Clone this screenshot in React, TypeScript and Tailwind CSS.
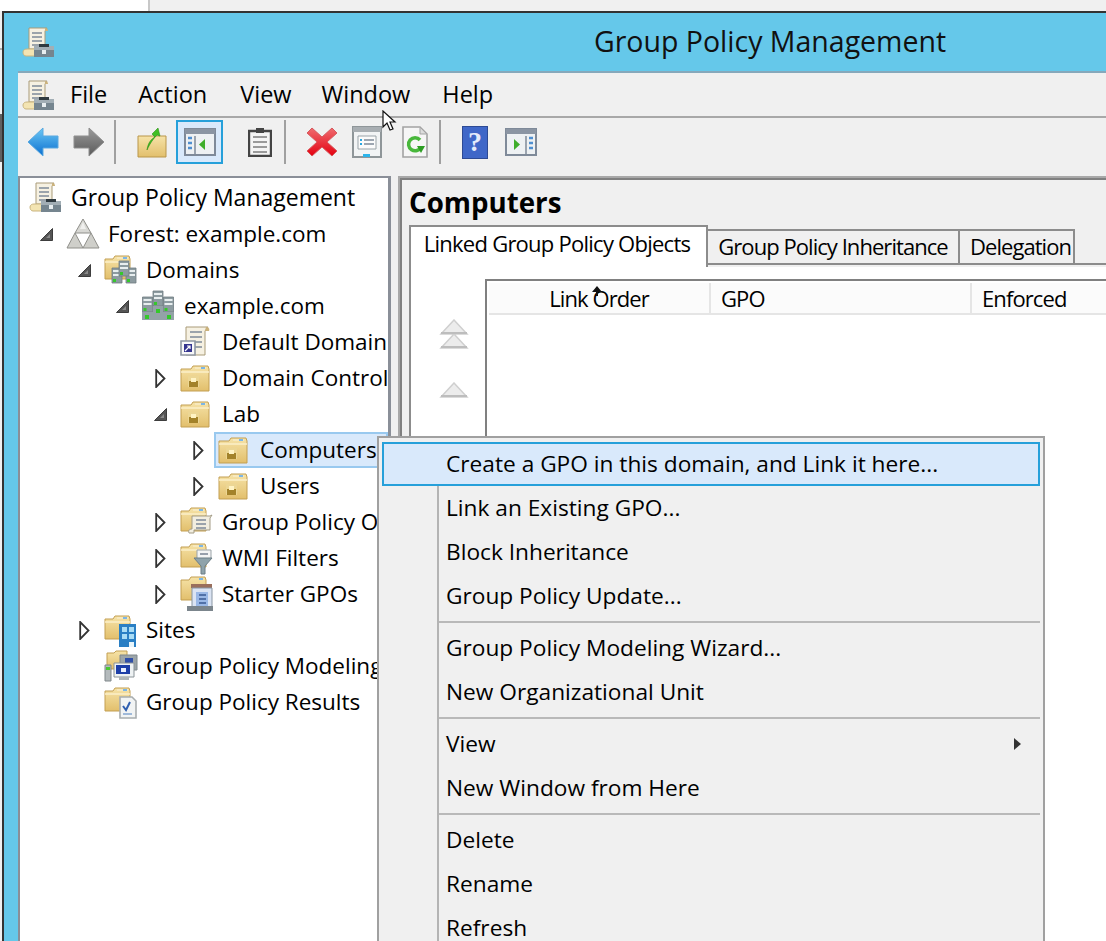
import React from "react";

const Paper = ({ x = 0, y = 0 }: { x?: number; y?: number }) => (
  <g transform={`translate(${x} ${y})`}>
    <path d="M7 1h18l-2 3v18H7z" fill="#f6f1e2" stroke="#a99b78" />
    <path d="M23 1c2 0 3 1 3 3h-3z" fill="#cbb27c" />
    <path d="M10 6h10M10 10h10M10 14h10M10 18h8" stroke="#7f8a99" strokeWidth="1.6" />
  </g>
);

const GpmIcon = () => (
  <svg width="32" height="30" viewBox="0 0 32 30" className="shrink-0">
    <Paper />
    <path d="M1 25c0-2 2-3 4-3h10v7H4c-2 0-3-2-3-4z" fill="#f3e4b2" stroke="#c9b47e" />
    <path d="M12 19h20v11H12z" fill="#75858f" />
    <path d="M12 19h20v4H12z" fill="#a2aeb5" />
    <path d="M17 17h10v3H17z" fill="#2f3a40" />
    <path d="M20 23h4v4h-4z" fill="#e8eef0" />
  </svg>
);

const folderBody = (
  <>
    <path d="M1 5h10l2-3h15l1 3v22H1z" fill="url(#fold)" stroke="#c39f52" />
    <path d="M15 3h11v2H15z" fill="#f7e8bd" />
    <path d="M21 3h4v2h-4z" fill="#7cb6e6" />
    <path d="M1 8h28" stroke="#fbefc9" strokeWidth="1.5" />
  </>
);

const OuFolder = () => (
  <svg width="30" height="28" viewBox="0 0 30 28" className="shrink-0">
    {folderBody}
    <path d="M8 12h11v11H8z" fill="#ecd694" />
    <path d="M9 17h9v6H9z" fill="#a3822a" />
    <path d="M11 14h5v4h-5z" fill="#fff3c4" />
  </svg>
);

const Server = ({ x, y }: { x: number; y: number }) => (
  <g transform={`translate(${x} ${y})`}>
    <path d="M0 0h10v15H0z" fill="#8d9ba0" stroke="#6f7b80" strokeWidth=".8" />
    <path d="M1 2h8v2H1zM1 6h8v2H1z" fill="#e8eeef" />
    <path d="M1 11h3v3H1z" fill="#35c82b" />
  </g>
);

const PlainFolder = ({ children }: { children?: React.ReactNode }) => (
  <svg width="34" height="34" viewBox="0 0 34 34" className="shrink-0">
    <path d="M1 6h8l2-3h14l1 3v20H1z" fill="url(#fold)" stroke="#c39f52" />
    <path d="M13 4h11v2H13z" fill="#f7e8bd" />
    <path d="M19 4h4v2h-4z" fill="#7cb6e6" />
    <path d="M1 9h25" stroke="#fbefc9" strokeWidth="1.5" />
    {children}
  </svg>
);

const Icon = ({ name }: { name: string }) => {
  switch (name) {
    case "root":
      return <GpmIcon />;
    case "forest":
      return (
        <svg width="34" height="32" viewBox="0 0 34 32" className="shrink-0">
          <path d="M17 1l8 14H9z" fill="#d8d8d4" stroke="#8f8f8a" />
          <path d="M9 15l8 15H1z" fill="#cfcfca" stroke="#8f8f8a" />
          <path d="M25 15l8 15H17z" fill="#cfcfca" stroke="#8f8f8a" />
          <path d="M17 4l-3 7h6z" fill="#f0f0ee" />
        </svg>
      );
    case "domains":
      return (
        <PlainFolder>
          <Server x={8} y={15} />
          <Server x={22} y={15} />
          <Server x={15} y={8} />
        </PlainFolder>
      );
    case "domain":
      return (
        <svg width="32" height="32" viewBox="0 0 32 32" className="shrink-0">
          <Server x={11} y={1} />
          <Server x={0.5} y={7} />
          <Server x={21.5} y={7} />
          <path d="M0 22h11v8H0zM21 22h11v8H21zM11 16h10v14H11z" fill="#94a2a7" />
          <path d="M3 25h4v4H3zM14 19h4v4h-4zM25 25h4v4h-4z" fill="#35c82b" />
        </svg>
      );
    case "link":
      return (
        <svg width="32" height="32" viewBox="0 0 32 32" className="shrink-0">
          <path d="M6 1h22l-3 4v24H6z" fill="#f6f1e2" stroke="#a99b78" />
          <path d="M26 1c2 0 4 1 3 4h-4z" fill="#cbb27c" />
          <path d="M10 6h12M10 11h12M14 16h8M14 21h8" stroke="#7f8a99" strokeWidth="1.6" />
          <path d="M1 15h14v14H1z" fill="#f8f8f8" stroke="#8e97a3" strokeWidth="1.6" />
          <path d="M4 18h8v8H4z" fill="#34348f" />
          <path d="M5 25l5-5M7 20h3v3" stroke="#fff" strokeWidth="1.2" fill="none" />
        </svg>
      );
    case "ou":
      return <OuFolder />;
    case "gpos":
      return (
        <PlainFolder>
          <path d="M12 11h18l2-1-2 3v12H14v3H9c-1-2 0-4 3-4z" fill="#f2eee0" stroke="#a39c86" />
          <path d="M16 15h10M16 19h10M16 23h10" stroke="#7f8a99" strokeWidth="1.6" />
        </PlainFolder>
      );
    case "wmi":
      return (
        <PlainFolder>
          <path d="M17 9h14v9H17z" fill="#f4f4f4" stroke="#9aa3a8" />
          <path d="M20 13h8" stroke="#7f8a99" strokeWidth="1.6" />
          <path d="M14 17h18l-7 8v8h-4v-8z" fill="#8fa3ab" stroke="#6d7f87" />
        </PlainFolder>
      );
    case "starter":
      return (
        <svg width="34" height="36" viewBox="0 0 34 36" className="shrink-0">
          <path d="M1 4h8l2-3h14l1 3v20H1z" fill="url(#fold)" stroke="#c39f52" />
          <path d="M19 2h4v2h-4z" fill="#7cb6e6" />
          <path d="M11 8h21v4H11z" fill="#9a6f5c" />
          <path d="M12 12h20v20H12z" fill="#dbe4f3" stroke="#8996a3" />
          <path d="M7 30h26v5H7z" fill="#7b858c" />
          <path d="M16 16h12v14H16z" fill="#9ab8e6" />
          <path d="M19 19h7M19 23h7M19 27h7" stroke="#3a5a94" strokeWidth="1.6" />
        </svg>
      );
    case "sites":
      return (
        <PlainFolder>
          <path d="M15 11h17v23H15z" fill="#2a7fc4" />
          <path d="M18 14h5v5h-5zM25 14h5v5h-5zM18 21h5v5h-5zM25 21h5v5h-5z" fill="#a9dcf5" />
          <path d="M25 29h5v5h-5z" fill="#e9f6fb" />
        </PlainFolder>
      );
    case "modeling":
      return (
        <svg width="34" height="34" viewBox="0 0 34 34" className="shrink-0">
          <path d="M3 4h7l2-2h11v18H3z" fill="url(#fold)" stroke="#c39f52" />
          <path d="M16 6h17v15H16z" fill="#9ca5a9" stroke="#7f888c" />
          <path d="M21 9h8v8h-8z" fill="#2f4fa8" />
          <path d="M10 14h20v14H10z" fill="#eef2f3" stroke="#8b9498" />
          <path d="M12 16h14v9H12z" fill="#1d3fa8" />
          <path d="M17 19h5v4h-5z" fill="#e8f0ff" />
          <path d="M15 28h10v3H15z" fill="#aeb5b8" />
          <path d="M1 16h6v16H1z" fill="#b4babc" stroke="#80888b" />
          <path d="M2 18h4v3H2z" fill="#4cc832" />
        </svg>
      );
    case "results":
      return (
        <PlainFolder>
          <path d="M16 12h12l4 4v17H16z" fill="#f2f4f4" stroke="#a8adaf" strokeWidth="1.6" />
          <path d="M19 21l3 4 4-8" stroke="#2f5fb0" strokeWidth="2" fill="none" />
          <path d="M19 29h9" stroke="#9fb9d9" strokeWidth="2" />
        </PlainFolder>
      );
    default:
      return null;
  }
};

const Open = () => (
  <svg width="13" height="13" viewBox="0 0 13 13" className="shrink-0">
    <path d="M12.5.5v12H.5z" fill="#555" stroke="#3d3d3d" />
    <path d="M10 6v4H6z" fill="#8a8a8a" />
  </svg>
);

const Closed = () => (
  <svg width="11" height="19" viewBox="0 0 11 19" className="shrink-0">
    <path d="M1.2 1v17L9.5 9.5z" fill="#fff" stroke="#333" strokeWidth="1.8" />
  </svg>
);

type Row = { d: number; exp?: "o" | "c"; icon: string; label: string; sel?: boolean };

const rows: Row[] = [
  { d: 1, exp: "o", icon: "forest", label: "Forest: example.com" },
  { d: 2, exp: "o", icon: "domains", label: "Domains" },
  { d: 3, exp: "o", icon: "domain", label: "example.com" },
  { d: 4, icon: "link", label: "Default Domain Policy" },
  { d: 4, exp: "c", icon: "ou", label: "Domain Controllers" },
  { d: 4, exp: "o", icon: "ou", label: "Lab" },
  { d: 5, exp: "c", icon: "ou", label: "Computers", sel: true },
  { d: 5, exp: "c", icon: "ou", label: "Users" },
  { d: 4, exp: "c", icon: "gpos", label: "Group Policy Objects" },
  { d: 4, exp: "c", icon: "wmi", label: "WMI Filters" },
  { d: 4, exp: "c", icon: "starter", label: "Starter GPOs" },
  { d: 2, exp: "c", icon: "sites", label: "Sites" },
  { d: 2, icon: "modeling", label: "Group Policy Modeling" },
  { d: 2, icon: "results", label: "Group Policy Results" },
];

const indent: Record<number, string> = {
  1: "pl-[19px]",
  2: "pl-[57px]",
  3: "pl-[95px]",
  4: "pl-[133px]",
  5: "pl-[171px]",
};

const TreeRow = ({ row }: { row: Row }) => (
  <div className={`flex h-9 items-center whitespace-nowrap ${indent[row.d]}`}>
    <span className="flex w-[14px] shrink-0 justify-center">
      {row.exp === "o" && <Open />}
      {row.exp === "c" && <Closed />}
    </span>
    <span
      className={`ml-[9px] flex h-9 grow items-center ${
        row.sel ? "border-2 border-[#99c9ef] bg-[#d9e9fb] pl-[2px]" : "pl-[4px]"
      }`}
    >
      <span className="flex w-[31px] shrink-0 justify-start">
        <Icon name={row.icon} />
      </span>
      <span className="ml-[11px] text-[22.500px] text-black">{row.label}</span>
    </span>
  </div>
);

const MenuItem = ({ label, hot, arrow }: { label: string; hot?: boolean; arrow?: boolean }) => (
  <div
    className={`flex h-11 items-center justify-between pr-[18px] text-[22.700px] text-black ${
      hot
        ? "mr-[3px] ml-[3px] border-2 border-[#26a0da] bg-[#d9e9fb] pl-[62px]"
        : "mr-[3px] ml-[58px] border-l-2 border-[#b4b4b4] pl-[7px]"
    }`}
  >
    <span className="whitespace-nowrap">{label}</span>
    {arrow && (
      <svg width="9" height="14" viewBox="0 0 9 14">
        <path d="M1 1l7 6-7 6z" fill="#333" />
      </svg>
    )}
  </div>
);

const MenuSep = () => (
  <div className="mr-[3px] ml-[58px] flex h-2 items-center border-l-2 border-[#b4b4b4]">
    <div className="h-[2px] w-full bg-[#b9b9b9]" />
  </div>
);

const ToolSep = () => <div className="h-11 w-[2px] bg-[#a0a0a0]" />;

const Toolbar = () => (
  <div className="flex h-[58px] items-start bg-[#f0f0f0] pt-[2px]">
    <div className="flex h-11 items-center">
      <svg width="32" height="30" viewBox="0 0 32 30" className="ml-[9px]">
        <defs>
          <linearGradient id="fold" x1="0" y1="0" x2="0" y2="1">
            <stop offset="0" stopColor="#f6e3a8" />
            <stop offset="1" stopColor="#e2bf6c" />
          </linearGradient>
          <linearGradient id="blue" x1="0" y1="0" x2="0" y2="1">
            <stop offset="0" stopColor="#6cc8f5" />
            <stop offset="1" stopColor="#0b6fd0" />
          </linearGradient>
          <linearGradient id="grey" x1="0" y1="0" x2="0" y2="1">
            <stop offset="0" stopColor="#9a9a9a" />
            <stop offset="1" stopColor="#5a5a5a" />
          </linearGradient>
          <linearGradient id="red" x1="0" y1="0" x2="0" y2="1">
            <stop offset="0" stopColor="#ef6b6f" />
            <stop offset="1" stopColor="#e40010" />
          </linearGradient>
        </defs>
        <path d="M1 15L16 1v8h15v12H16v8z" fill="url(#blue)" stroke="#5aa9e0" />
      </svg>
      <svg width="32" height="30" viewBox="0 0 32 30" className="ml-[14px]">
        <path d="M31 15L16 1v8H1v12h15v8z" fill="url(#grey)" stroke="#8f8f8f" />
      </svg>
      <div className="ml-[9px]">
        <ToolSep />
      </div>
      <svg width="30" height="32" viewBox="0 0 30 32" className="ml-[21px]">
        <path d="M1 10h28v21H1z" fill="url(#fold)" stroke="#b9964a" />
        <path d="M10 24c1-7 4-11 8-13l-3-3 6-6 2 8-3-1c-3 3-7 8-10 15z" fill="#3fbf24" stroke="#2c8f14" strokeWidth=".6" />
      </svg>
      <div className="ml-[9px] flex h-11 w-[47px] items-center justify-center border-2 border-[#26a0da] bg-[#d9e9fb]">
        <svg width="32" height="28" viewBox="0 0 32 28">
          <path d="M1 1h30v26H1z" fill="#eef1f3" stroke="#7f8a99" strokeWidth="2" />
          <path d="M1 1h30v5H1z" fill="#8b95a3" />
          <path d="M4 10h4M4 15h4M4 20h4" stroke="#4f8fd0" strokeWidth="2.500" />
          <path d="M11 8v19" stroke="#7f8a99" strokeWidth="1.500" />
          <path d="M21 11v11l-6-5.500z" fill="#3fae2b" />
        </svg>
      </div>
      <svg width="24" height="30" viewBox="0 0 24 30" className="ml-[25px]">
        <path d="M1 4h22v25H1z" fill="#f4f4f4" stroke="#444" strokeWidth="2.400" />
        <path d="M8 1h8v5H8z" fill="#444" />
        <path d="M5 10h14M5 15h14M5 20h14M5 25h14" stroke="#9a9a9a" strokeWidth="2" />
      </svg>
      <div className="ml-[12px]">
        <ToolSep />
      </div>
      <svg width="32" height="32" viewBox="0 0 32 32" className="ml-[20px]">
        <path d="M6 2l10 9L26 2l5 5-10 9 10 9-5 5-10-9-10 9-5-5 10-9L1 7z" fill="url(#red)" stroke="#d65a5e" />
      </svg>
      <svg width="30" height="32" viewBox="0 0 30 32" className="ml-[14px]">
        <path d="M1 1h28v30H1z" fill="#f2f4f5" stroke="#8f9699" strokeWidth="2" />
        <path d="M1 1h28v5H1z" fill="#a8aeb2" />
        <path d="M6 10h18v13H6z" fill="#fbfbfb" stroke="#9aa3a8" />
        <path d="M8 14h2M8 18h2" stroke="#2ba6e0" strokeWidth="2" />
        <path d="M12 14h10M12 18h10" stroke="#7f8a99" strokeWidth="1.500" />
        <path d="M11 28h7v3h-7z" fill="#2cb4ea" />
      </svg>
      <svg width="26" height="32" viewBox="0 0 26 32" className="ml-[20px]">
        <path d="M1 1h17l7 7v23H1z" fill="#f6f6f6" stroke="#a3a3a3" strokeWidth="1.600" />
        <path d="M18 2v6h6" fill="#ddd" stroke="#a3a3a3" />
        <path d="M18 14a6.500 6.500 0 1 0 1 7" fill="none" stroke="#49b83c" strokeWidth="3.500" />
        <path d="M15 20h8l-4 7z" fill="#2d9e23" />
      </svg>
      <div className="ml-[11px]">
        <ToolSep />
      </div>
      <div className="ml-[21px] flex h-[33px] w-[26px] items-center justify-center border border-[#2d4a94] bg-[#3f67c8] font-['Liberation_Serif',serif] text-[28px] leading-none font-bold text-[#e4ebfb]">
        ?
      </div>
      <svg width="32" height="28" viewBox="0 0 32 28" className="ml-[17px]">
        <path d="M1 1h30v26H1z" fill="#eef1f3" stroke="#7f8a99" strokeWidth="2" />
        <path d="M1 1h30v5H1z" fill="#8b95a3" />
        <path d="M24 10h4M24 15h4M24 20h4" stroke="#4f8fd0" strokeWidth="2.500" />
        <path d="M21 8v19" stroke="#7f8a99" strokeWidth="1.500" />
        <path d="M9 11v11l6-5.500z" fill="#3fae2b" />
      </svg>
    </div>
  </div>
);

const TabLabel = ({ label, wide }: { label: string; wide: string }) => (
  <div
    className={`mt-[4px] flex h-[36px] items-center justify-center border-t-2 border-r-2 border-b-2 border-[#8c8c8c] bg-[#f0f0f0] pb-[2px] text-[22px] tracking-[-0.950px] whitespace-nowrap text-black ${wide}`}
  >
    {label}
  </div>
);

const RightPane = () => (
  <div className="flex min-w-0 grow border-t-2 border-l-2 border-[#a8a8a8]">
    <div className="flex min-w-0 grow flex-col border-t-2 border-l-2 border-[#808080] bg-[#f0f0f0] pl-[7px]">
      <div className="mt-[5px] h-[40px] text-[27.700px] leading-[34px] font-bold text-black">Computers</div>
      <div className="flex items-start">
        <div className="z-10 flex h-[42px] w-[299px] shrink-0 items-center justify-center border-x-2 border-t-2 border-[#8c8c8c] bg-white pr-[3px] pb-[8px] text-[22px] tracking-[-0.750px] whitespace-nowrap text-black">
          Linked Group Policy Objects
        </div>
        <TabLabel label="Group Policy Inheritance" wide="w-[252px] shrink-0" />
        <TabLabel label="Delegation" wide="w-[115px] shrink-0 pl-[8px]" />
        <div className="mt-[38px] h-[2px] grow bg-[#8c8c8c]" />
      </div>
      <div className="flex grow border-l-2 border-[#8c8c8c] bg-white">
        <div className="flex w-[74px] shrink-0 flex-col items-center pt-[52px] pl-[12px]">
          <svg width="30" height="30" viewBox="0 0 30 30">
            <path d="M15 1l13 14H2zM15 15l13 14H2z" fill="#ececec" stroke="#cfcfcf" strokeWidth="1.500" />
            <path d="M2 14h26M2 28h26" stroke="#bdbdbd" strokeWidth="2" />
          </svg>
          <svg width="30" height="16" viewBox="0 0 30 16" className="mt-[33px]">
            <path d="M15 1l13 14H2z" fill="#ececec" stroke="#cfcfcf" strokeWidth="1.500" />
            <path d="M2 14h26" stroke="#bdbdbd" strokeWidth="2" />
          </svg>
        </div>
        <div className="mt-[12px] grow border-t-2 border-l-2 border-[#808080] pt-[2px] pl-[2px]">
          <div className="flex h-[32px] border-b-2 border-[#e5e5e5] bg-[#fbfbfb] text-[22px] tracking-[-0.900px] whitespace-nowrap text-black">
            <div className="relative flex w-[222px] shrink-0 items-center justify-center border-r-2 border-[#e5e5e5]">
              Link Order
              <svg width="12" height="10" viewBox="0 0 12 10" className="absolute top-[3px] left-[102px]">
                <path d="M6 0l5 6H7v4H5V6H1z" fill="#111" />
              </svg>
            </div>
            <div className="flex w-[261px] shrink-0 items-center border-r-2 border-[#e5e5e5] pl-[10px]">GPO</div>
            <div className="flex grow items-center pl-[10px]">Enforced</div>
          </div>
        </div>
      </div>
    </div>
  </div>
);

export default function App() {
  return (
    <div className="relative h-[941px] w-[1106px] overflow-hidden bg-[#f0f0f0] font-['Open_Sans',sans-serif]">
      <div className="flex h-[11px]">
        <div className="w-[148px] bg-white" />
        <div className="w-[2px] bg-[#c8c8c8]" />
      </div>
      <div className="absolute top-[48px] left-0 h-[2px] w-[2px] bg-[#b0b0b0]" />
      <div className="absolute top-[114px] left-0 h-[48px] w-[2px] bg-[#606060]" />
      <div className="ml-[2px] flex h-[930px] flex-col border-t-2 border-l-2 border-[#333333] bg-[#65c8ea]">
        <div className="relative flex h-[58px] shrink-0 items-center pl-[18px]">
          <GpmIcon />
          <div className="ml-[540px] pb-[2px] text-[28.500px] whitespace-nowrap text-[#111]">Group Policy Management</div>
        </div>
        <div className="ml-[14px] flex min-h-0 grow flex-col border-t-2 border-[#86a8bb] bg-[#f0f0f0]">
          <div className="flex h-[45px] shrink-0 items-center border-b-2 border-[#a8a8a8] pl-[4px] text-[23.500px] text-black">
            <GpmIcon />
            <span className="ml-[16px]">File</span>
            <span className="ml-[31px]">Action</span>
            <span className="ml-[33px]">View</span>
            <span className="ml-[30px]">Window</span>
            <span className="ml-[32px]">Help</span>
          </div>
          <Toolbar />
          <div className="flex min-h-0 grow">
            <div className="w-[373px] shrink-0 overflow-hidden border-t-2 border-r-[3px] border-l-2 border-[#8a8f98] bg-white">
              <div className="flex h-[38px] items-center pl-[9px] whitespace-nowrap">
                <GpmIcon />
                <span className="ml-[10px] text-[23px] text-black">Group Policy Management</span>
              </div>
              {rows.map((r) => (
                <TreeRow key={r.label} row={r} />
              ))}
            </div>
            <div className="w-[7px] shrink-0" />
            <RightPane />
          </div>
        </div>
      </div>

      <div className="absolute top-[436px] left-[377px] h-[520px] w-[668px] border-2 border-[#a0a0a0] bg-[#f0f0f0] pt-[4px]">
        <MenuItem label="Create a GPO in this domain, and Link it here..." hot />
        <MenuItem label="Link an Existing GPO..." />
        <MenuItem label="Block Inheritance" />
        <MenuItem label="Group Policy Update..." />
        <MenuSep />
        <MenuItem label="Group Policy Modeling Wizard..." />
        <MenuItem label="New Organizational Unit" />
        <MenuSep />
        <MenuItem label="View" arrow />
        <MenuItem label="New Window from Here" />
        <MenuSep />
        <MenuItem label="Delete" />
        <MenuItem label="Rename" />
        <MenuItem label="Refresh" />
      </div>

      <svg width="15" height="21" viewBox="0 0 15 21" className="absolute top-[110px] left-[382px]">
        <path d="M1 1v16l4-4 3 7 3-1-3-7h5z" fill="#fff" stroke="#111" strokeWidth="1.200" />
      </svg>
    </div>
  );
}
